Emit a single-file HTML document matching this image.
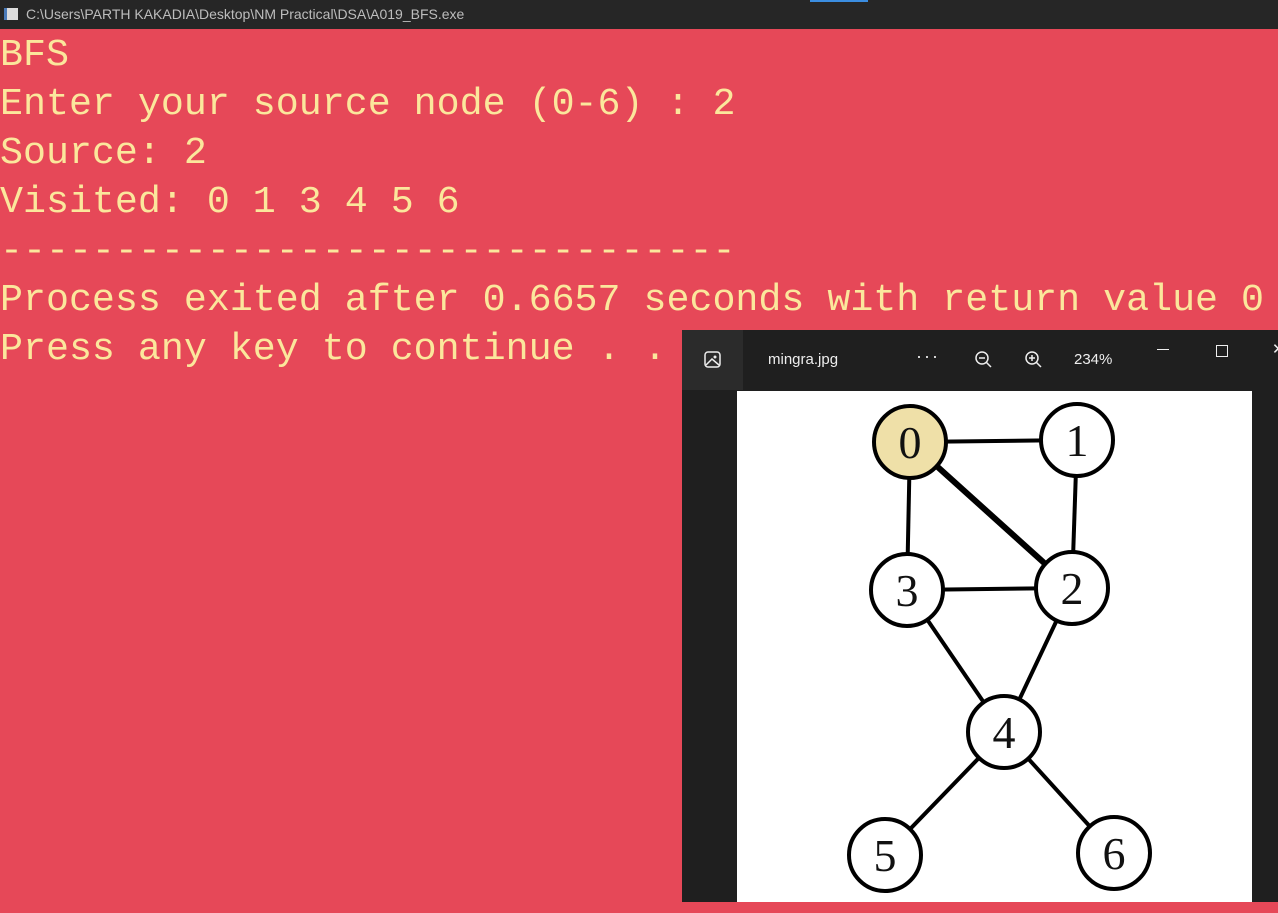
<!DOCTYPE html>
<html><head><style>
body{margin:0;width:1278px;height:913px;background:#e64858;overflow:hidden;position:relative;font-family:"Liberation Sans",sans-serif}
.tb{position:absolute;left:0;top:0;width:1278px;height:29px;background:#262626;color:#bdbdbd;font-size:14px;line-height:29px}
.tb .ic{position:absolute;left:4px;top:8px;width:14px;height:12px;background:#ddd;border-left:3px solid #4a7ab8;box-sizing:border-box}
.tb span{position:absolute;left:26px;top:0}
.blue{position:absolute;left:810px;top:0;width:58px;height:2px;background:#3b8de0}
.con{position:absolute;left:0;top:31px;font-family:"Liberation Mono",monospace;font-size:38.3px;line-height:49px;color:#fbe79c;white-space:pre}
.v{position:absolute;left:682px;top:330px;width:600px;height:572px;background:#1f1f1f}
.lp{position:absolute;left:0;top:0;width:61px;height:60px;background:#2b2b2b}
.t{position:absolute;color:#eee;font-size:15px;top:21px}
.img{position:absolute;left:55px;top:61px;width:515px;height:511px;background:#fff}
</style></head><body>
<div class="tb"><div class="ic"></div><span>C:\Users\PARTH KAKADIA\Desktop\NM Practical\DSA\A019_BFS.exe</span></div>
<div class="blue"></div>
<div class="con">BFS
Enter your source node (0-6) : 2
Source: 2
Visited: 0 1 3 4 5 6
--------------------------------
Process exited after 0.6657 seconds with return value 0
Press any key to continue . . .</div>
<div class="v">
<div class="lp"><svg width="61" height="60"><rect x="23" y="22" width="15" height="15" rx="3" fill="none" stroke="#eee" stroke-width="1.5"/><path d="M24 35 L30 29 L37 35" fill="none" stroke="#eee" stroke-width="1.5"/><circle cx="33" cy="27" r="1.5" fill="#eee"/></svg></div>
<div class="t" style="left:86px">mingra.jpg</div>
<div class="t" style="left:234px;top:16px;letter-spacing:2px;font-size:18px">···</div>
<svg style="position:absolute;left:292px;top:20px" width="20" height="20"><circle cx="8" cy="8" r="6" fill="none" stroke="#eee" stroke-width="1.5"/><path d="M5 8H11M12.5 12.5L17 17" stroke="#eee" stroke-width="1.5"/></svg>
<svg style="position:absolute;left:342px;top:20px" width="20" height="20"><circle cx="8" cy="8" r="6" fill="none" stroke="#eee" stroke-width="1.5"/><path d="M5 8H11M8 5V11M12.5 12.5L17 17" stroke="#eee" stroke-width="1.5"/></svg>
<div class="t" style="left:392px">234%</div>
<div style="position:absolute;left:475px;top:19px;width:12px;height:1px;background:#eee"></div>
<div style="position:absolute;left:534px;top:15px;width:10px;height:10px;border:1px solid #eee"></div>
<div class="t" style="left:590px;top:10px">✕</div>
<div class="img"></div>
<svg style="position:absolute;left:0;top:0" width="600" height="572">
<g transform="translate(-682,-330)" stroke="#000" stroke-width="4" fill="none">
<line x1="910" y1="442" x2="1077" y2="440"/><line x1="910" y1="442" x2="907" y2="590"/>
<line x1="910" y1="442" x2="1072" y2="588" stroke-width="6"/><line x1="1077" y1="440" x2="1072" y2="588"/>
<line x1="907" y1="590" x2="1072" y2="588"/><line x1="907" y1="590" x2="1004" y2="732"/>
<line x1="1072" y1="588" x2="1004" y2="732"/><line x1="1004" y1="732" x2="885" y2="855"/><line x1="1004" y1="732" x2="1114" y2="853"/>
<g fill="#fff">
<circle cx="910" cy="442" r="36" fill="#efe0a8"/><circle cx="1077" cy="440" r="36"/><circle cx="907" cy="590" r="36"/><circle cx="1072" cy="588" r="36"/><circle cx="1004" cy="732" r="36"/><circle cx="885" cy="855" r="36"/><circle cx="1114" cy="853" r="36"/>
</g>
<g fill="#111" stroke="none" font-family="Liberation Serif,serif" font-size="46" text-anchor="middle">
<text x="910" y="458">0</text><text x="1077" y="456">1</text><text x="907" y="606">3</text><text x="1072" y="604">2</text><text x="1004" y="748">4</text><text x="885" y="871">5</text><text x="1114" y="869">6</text>
</g></g></svg>
</div>
</body></html>
